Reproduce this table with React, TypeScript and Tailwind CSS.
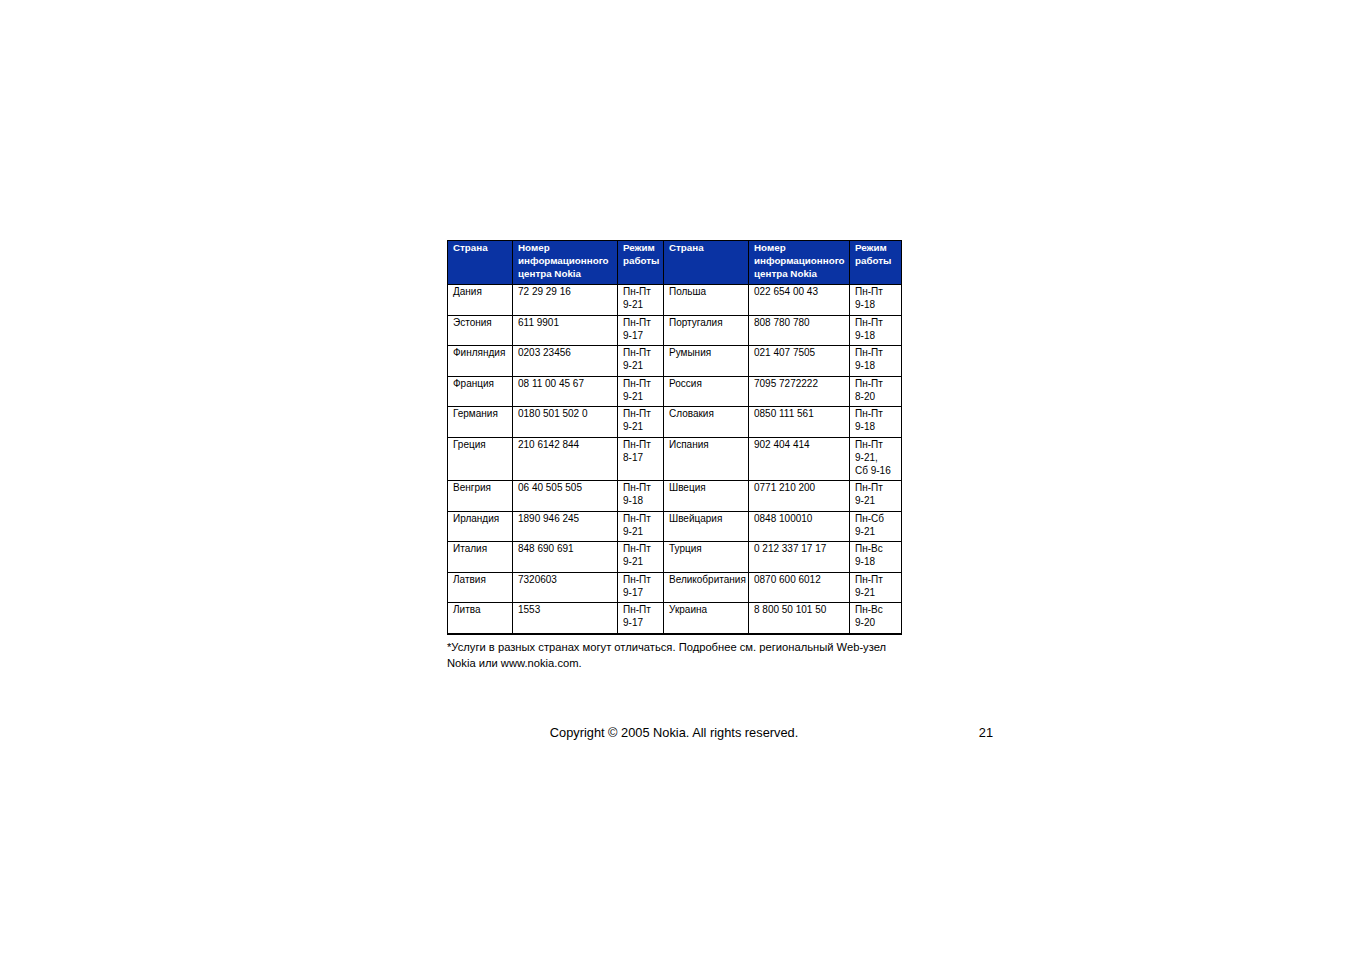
import React from "react";

const rows: [string, string, string[], string, string, string[]][] = [
  ["Дания", "72 29 29 16", ["Пн-Пт", "9-21"], "Польша", "022 654 00 43", ["Пн-Пт", "9-18"]],
  ["Эстония", "611 9901", ["Пн-Пт", "9-17"], "Португалия", "808 780 780", ["Пн-Пт", "9-18"]],
  ["Финляндия", "0203 23456", ["Пн-Пт", "9-21"], "Румыния", "021 407 7505", ["Пн-Пт", "9-18"]],
  ["Франция", "08 11 00 45 67", ["Пн-Пт", "9-21"], "Россия", "7095 7272222", ["Пн-Пт", "8-20"]],
  ["Германия", "0180 501 502 0", ["Пн-Пт", "9-21"], "Словакия", "0850 111 561", ["Пн-Пт", "9-18"]],
  ["Греция", "210 6142 844", ["Пн-Пт", "8-17"], "Испания", "902 404 414", ["Пн-Пт", "9-21,", "Сб 9-16"]],
  ["Венгрия", "06 40 505 505", ["Пн-Пт", "9-18"], "Швеция", "0771 210 200", ["Пн-Пт", "9-21"]],
  ["Ирландия", "1890 946 245", ["Пн-Пт", "9-21"], "Швейцария", "0848 100010", ["Пн-Сб", "9-21"]],
  ["Италия", "848 690 691", ["Пн-Пт", "9-21"], "Турция", "0 212 337 17 17", ["Пн-Вс", "9-18"]],
  ["Латвия", "7320603", ["Пн-Пт", "9-17"], "Великобритания", "0870 600 6012", ["Пн-Пт", "9-21"]],
  ["Литва", "1553", ["Пн-Пт", "9-17"], "Украина", "8 800 50 101 50", ["Пн-Вс", "9-20"]],
];

const widths = ["w-[65px]", "w-[105px]", "w-[46px]", "w-[85px]", "w-[101px]", "w-[52px]"];

export default function App() {
  const font = { fontFamily: '"Liberation Sans", Arial, sans-serif' };
  return (
    <div className="min-h-[954px] w-full bg-white text-black pt-[240px] pl-[447px]" style={font}>
      <table className="border-collapse table-fixed w-[454px] text-[10px] leading-[13px]">
        <colgroup>
          {widths.map((w, i) => (
            <col key={i} className={w} />
          ))}
        </colgroup>
        <thead>
          <tr className="bg-[#0a33a3] text-white font-bold align-top">
            {["Страна", "Номер информационного центра Nokia", "Режим работы", "Страна", "Номер информационного центра Nokia", "Режим работы"].map((h, i) => (
              <th key={i} className="border border-black text-left font-bold text-[9.8px] pl-[5px] pr-[1px] pt-0 pb-[4px] align-top">
                {h}
              </th>
            ))}
          </tr>
        </thead>
        <tbody>
          {rows.map((r, i) => (
            <tr key={i} className={`align-top ${i === rows.length - 1 ? "border-b-2 border-black" : ""}`}>
              {[r[0], r[1], r[2], r[3], r[4], r[5]].map((c, j) => (
                <td key={j} className="border-x border-t border-black pl-[5px] pr-[1px] pt-[0px] pb-[3.5px] align-top whitespace-nowrap">
                  {Array.isArray(c) ? c.map((l, k) => <div key={k}>{l}</div>) : <div>{c}</div>}
                  {!Array.isArray(c) && <div>&nbsp;</div>}
                </td>
              ))}
            </tr>
          ))}
        </tbody>
      </table>
      <p className="mt-[4px] w-[454px] text-[11.2px] leading-[16px]">
        *Услуги в разных странах могут отличаться. Подробнее см. региональный Web-узел Nokia или www.nokia.com.
      </p>
      <div className="mt-[54px] flex w-[546px] text-[12.8px] leading-[16px]">
        <div className="w-[454px] text-center">Copyright © 2005 Nokia. All rights reserved.</div>
        <div className="flex-1 text-right">21</div>
      </div>
    </div>
  );
}
